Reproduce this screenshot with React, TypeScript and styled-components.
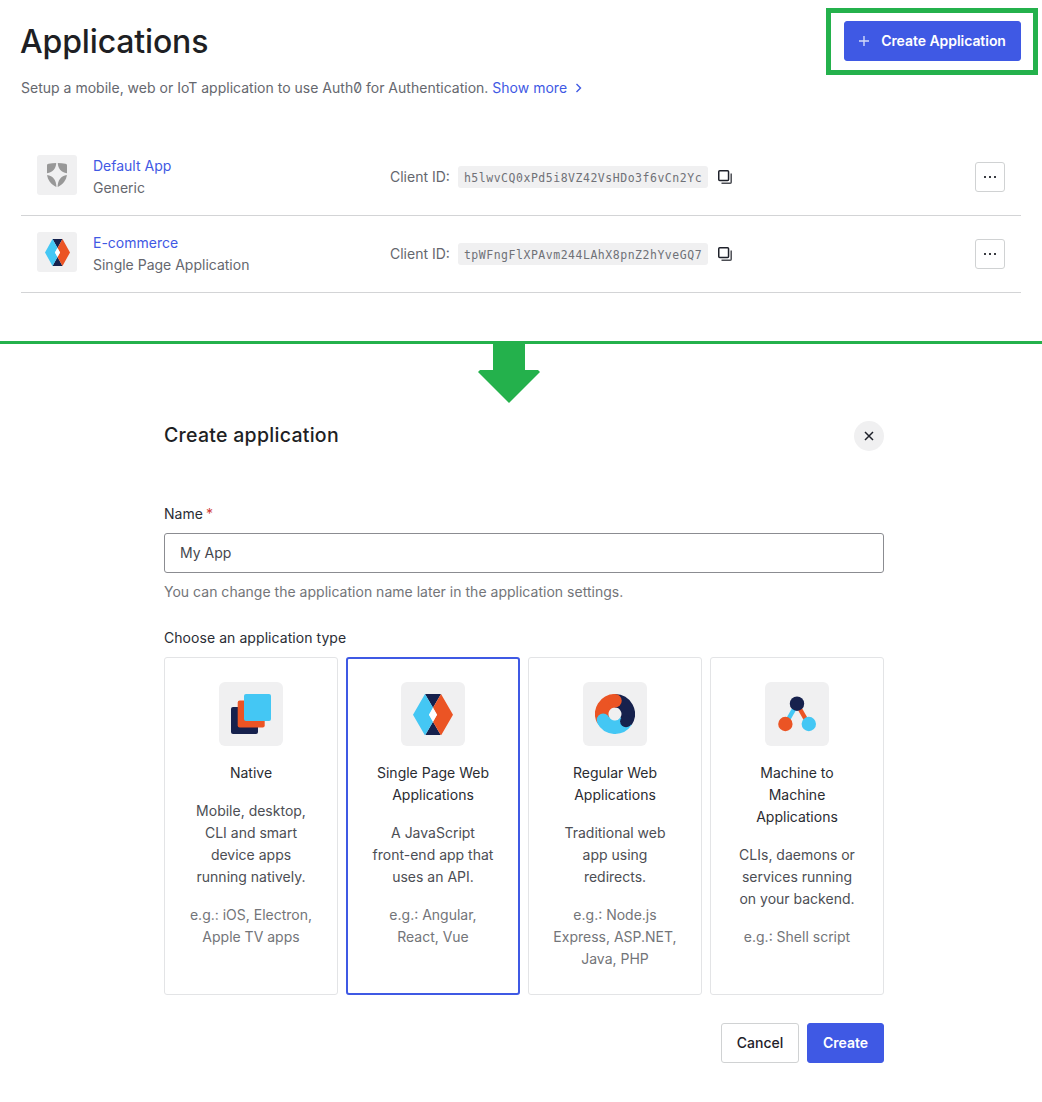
import React from "react";
import styled, { createGlobalStyle } from "styled-components";

const navy = "#16214d";
const orange = "#eb5424";
const sky = "#44c7f4";
const indigo = "#3f59e4";
const green = "#24b14c";

const Global = createGlobalStyle`
  * { box-sizing: border-box; }
  body { margin: 0; background: #fff; }
  h1, h2, p { margin: 0; font-weight: 400; }
  button { font: inherit; padding: 0; cursor: pointer; }
`;

const Page = styled.div`
  height: 1102px;
  overflow: hidden;
  font-family: Inter, "Liberation Sans", sans-serif;
  font-size: 14px;
  line-height: 22px;
  color: #65676e;
  letter-spacing: 0;
`;

const ListSection = styled.section`
  height: 341px;
  padding: 21px 21px 0;
`;

const Header = styled.header`
  display: flex;
  justify-content: space-between;
  height: 40px;
`;

const Title = styled.h1`
  margin-left: -1px;
  font-size: 32px;
  line-height: 42px;
  font-weight: 500;
  letter-spacing: -0.15px;
  color: #1e1f24;
`;

const Highlight = styled.div`
  position: relative;
  &::after {
    content: "";
    position: absolute;
    inset: -13px -17px -14px -18px;
    border: 5px solid ${green};
    pointer-events: none;
  }
`;

const Button = styled.button<{ $primary?: boolean; $width: number }>`
  display: flex;
  align-items: center;
  justify-content: center;
  width: ${(p) => p.$width}px;
  height: 40px;
  border-radius: 3px;
  border: 1px solid ${(p) => (p.$primary ? indigo : "#d0d2d3")};
  background: ${(p) => (p.$primary ? indigo : "#fff")};
  color: ${(p) => (p.$primary ? "#fff" : "#1e212a")};
  font-weight: ${(p) => (p.$primary ? 600 : 500)};
  letter-spacing: ${(p) => (p.$primary ? "-0.05px" : "0")};
  svg { margin-right: 12px; }
`;

const Intro = styled.p`
  display: flex;
  align-items: center;
  margin-top: 16px;
  white-space: pre;
  letter-spacing: 0.01px;
  font-feature-settings: "zero";
`;

const Link = styled.a`
  color: ${indigo};
`;

const Chevron = styled.svg`
  margin-left: 8px;
`;

const Rows = styled.div`
  margin-top: 40px;
`;

const Row = styled.div`
  display: flex;
  align-items: flex-start;
  height: 77px;
  padding: 16px 16px 0;
  border-bottom: 1px solid #d3d4d6;
`;

const IconTile = styled.div<{ $size: number }>`
  display: flex;
  flex: none;
  align-items: center;
  justify-content: center;
  width: ${(p) => p.$size}px;
  height: ${(p) => p.$size}px;
  border-radius: ${(p) => (p.$size > 40 ? 6 : 3)}px;
  background: #f0f0f1;
`;

const AppInfo = styled.div`
  width: 313px;
  padding-left: 16px;
`;

const ClientId = styled.div`
  display: flex;
  flex: 1;
  align-items: center;
  height: 44px;
`;

const ClientLabel = styled.span`
  width: 68px;
`;

const Code = styled.code`
  width: 250px;
  height: 22px;
  padding-top: 1px;
  margin-right: 10px;
  border-radius: 3px;
  background: #f0f0f1;
  text-align: center;
  font-family: "DejaVu Sans Mono", monospace;
  font-size: 11.5px;
  letter-spacing: 0.52px;
  color: #6f7177;
`;

const MoreButton = styled.button`
  display: flex;
  align-items: center;
  justify-content: center;
  width: 30px;
  height: 30px;
  margin-top: 7px;
  border: 1px solid #d0d2d3;
  border-radius: 3px;
  background: #fff;
`;

const Divider = styled.div`
  display: flex;
  flex-direction: column;
  height: 62px;
  border-top: 3px solid ${green};
`;

const Arrow = styled.svg`
  display: block;
  margin-left: 478px;
`;

const Dialog = styled.section`
  width: 720px;
  margin: 18px 0 0 164px;
`;

const DialogHeader = styled.header`
  display: flex;
  align-items: center;
  justify-content: space-between;
  height: 30px;
`;

const DialogTitle = styled.h2`
  padding-bottom: 2px;
  font-size: 19.5px;
  line-height: 28px;
  font-weight: 450;
  letter-spacing: 0.28px;
  color: #1e1f24;
`;

const CloseButton = styled.button`
  display: flex;
  align-items: center;
  justify-content: center;
  width: 30px;
  height: 30px;
  border: 0;
  border-radius: 50%;
  background: #f0f0f1;
`;

const Label = styled.label<{ $top: number; $bottom: number }>`
  display: block;
  margin: ${(p) => p.$top}px 0 ${(p) => p.$bottom}px;
  letter-spacing: 0.06px;
  color: #2a2d35;
  span { color: #d03c38; margin-left: 3px; }
`;

const Input = styled.input`
  display: block;
  width: 100%;
  height: 40px;
  padding: 0 15px 1px;
  border: 1px solid #8b8c91;
  border-radius: 3px;
  font: inherit;
  letter-spacing: inherit;
  color: #45474e;
`;

const Help = styled.p`
  margin-top: 8px;
  letter-spacing: 0.015px;
  color: #737579;
`;

const Cards = styled.div`
  display: grid;
  grid-template-columns: repeat(4, 174px);
  gap: 8px;
`;

const Card = styled.div<{ $selected?: boolean }>`
  display: flex;
  flex-direction: column;
  align-items: center;
  gap: 16px;
  height: 338px;
  padding-top: ${(p) => (p.$selected ? 23 : 24)}px;
  border: ${(p) => (p.$selected ? `2px solid ${indigo}` : "1px solid #e3e4e6")};
  border-radius: 3px;
  text-align: center;
  white-space: pre-line;
`;

const CardTitle = styled.p`
  color: #2a2c32;
`;

const CardText = styled.p`
  color: #4c4e54;
`;

const CardExample = styled.p`
  color: #737579;
`;

const Footer = styled.footer`
  display: flex;
  justify-content: flex-end;
  gap: 8px;
  margin-top: 28px;
`;

const ShieldIcon = () => (
  <svg width="20" height="24" viewBox="0 0 20 24" fill="#989898">
    <path d="M9.200 0C9.200 5 6 9.300 0 10.200V2.500C0 1.400.5.900 1.600.700 4 .2 6.500 0 9.200 0Z" />
    <path d="M10.800 0C10.800 5 14 9.300 20 10.200V2.500C20 1.400 19.500.900 18.400.700 16 .2 13.500 0 10.800 0Z" />
    <path d="M.1 12C6 12.800 9.200 17 9.400 24 4 21.500.7 17 .1 12Z" />
    <path d="M19.900 12C14 12.800 10.800 17 10.600 24 16 21.500 19.300 17 19.900 12Z" />
  </svg>
);

const SpaSvg = styled.svg`
  margin-top: 1px;
`;

const SpaIcon = ({ width, height }: { width: number; height: number }) => (
  <SpaSvg width={width} height={height} viewBox="0 0 40 42" preserveAspectRatio="none">
    <path d="M12 0H28L20 14ZM12 42H28L20 28Z" fill={navy} />
    <path d="M12 0 20 14 16 21 20 28 12 42 0 21Z" fill={sky} />
    <path d="M28 0 20 14 24 21 20 28 28 42 40 21Z" fill={orange} />
    <path d="M20 14 24 21 20 28 16 21Z" fill="#fff" />
  </SpaSvg>
);

const NativeIcon = () => (
  <svg width="40" height="40" viewBox="0 0 40 40">
    <rect y="13" width="27" height="27" rx="2" fill={navy} />
    <rect x="6.700" y="6.500" width="27" height="27" rx="2" fill={orange} />
    <rect x="13" width="27" height="27" rx="2" fill={sky} />
  </svg>
);

const WebIcon = () => (
  <svg width="40" height="40" viewBox="0 0 40 40">
    <g fill="none" strokeWidth="13.500">
      <path d="M20 6.750A13.250 13.250 0 0 1 31 27.300" stroke={navy} />
      <path d="M31 27.300A13.250 13.250 0 0 1 8.200 26" stroke={sky} />
      <path d="M8.200 26A13.250 13.250 0 0 1 20 6.750" stroke={orange} />
    </g>
    <circle cx="31" cy="27.300" r="5.900" fill={navy} />
    <circle cx="8.200" cy="26" r="6.500" fill={sky} />
    <circle cx="20" cy="6.750" r="6.750" fill={orange} />
  </svg>
);

const MachineIcon = () => (
  <svg width="40" height="40" viewBox="0 0 40 40">
    <path d="M20 10 8.500 30" stroke={sky} strokeWidth="4.500" />
    <path d="M20 10 31.500 30" stroke={orange} strokeWidth="4.500" />
    <circle cx="20" cy="9.700" r="7.200" fill={navy} />
    <circle cx="8.400" cy="30" r="7.200" fill={orange} />
    <circle cx="31.800" cy="30" r="7.200" fill={sky} />
  </svg>
);

const CopyIcon = () => (
  <svg width="14" height="14" viewBox="0 0 14 14" fill="none">
    <rect x=".75" y=".75" width="9.800" height="9.800" rx="1" stroke="#1e212a" strokeWidth="1.500" />
    <path d="M13.200 3.500V12.200Q13.200 13.200 12.200 13.200H3.500" stroke="#4c4e54" strokeWidth="1.500" />
  </svg>
);

const apps = [
  { name: "Default App", kind: "Generic", id: "h5lwvCQ0xPd5i8VZ42VsHDo3f6vCn2Yc", icon: <ShieldIcon /> },
  { name: "E-commerce", kind: "Single Page Application", id: "tpWFngFlXPAvm244LAhX8pnZ2hYveGQ7", icon: <SpaIcon width={25} height={27} /> },
];

const types = [
  { title: "Native", text: "Mobile, desktop,\nCLI and smart\ndevice apps\nrunning natively.", example: "e.g.: iOS, Electron,\nApple TV apps", icon: <NativeIcon /> },
  { title: "Single Page Web\nApplications", text: "A JavaScript\nfront-end app that\nuses an API.", example: "e.g.: Angular,\nReact, Vue", icon: <SpaIcon width={40} height={41.5} />, selected: true },
  { title: "Regular Web\nApplications", text: "Traditional web\napp using\nredirects.", example: "e.g.: Node.js\nExpress, ASP.NET,\nJava, PHP", icon: <WebIcon /> },
  { title: "Machine to\nMachine\nApplications", text: "CLIs, daemons or\nservices running\non your backend.", example: "e.g.: Shell script", icon: <MachineIcon /> },
];

export default function App() {
  return (
    <Page>
      <Global />
      <ListSection>
        <Header>
          <Title>Applications</Title>
          <Highlight>
            <Button $primary $width={177}>
              <svg width="10" height="10" viewBox="0 0 10 10" stroke="#d3daf9" strokeWidth="1.400">
                <path d="M0 5H10M5 0V10" />
              </svg>
              Create Application
            </Button>
          </Highlight>
        </Header>
        <Intro>
          Setup a mobile, web or IoT application to use Auth0 for Authentication. <Link>Show more</Link>
          <Chevron width="7" height="10" viewBox="0 0 7 10" fill="none" stroke={indigo} strokeWidth="1.400">
            <path d="M1.500 1 5.500 5 1.500 9" />
          </Chevron>
        </Intro>
        <Rows>
          {apps.map((app) => (
            <Row key={app.id}>
              <IconTile $size={40}>{app.icon}</IconTile>
              <AppInfo>
                <Link>{app.name}</Link>
                <p>{app.kind}</p>
              </AppInfo>
              <ClientId>
                <ClientLabel>Client ID:</ClientLabel>
                <Code>{app.id}</Code>
                <CopyIcon />
              </ClientId>
              <MoreButton aria-label="More">
                <svg width="12" height="2" viewBox="0 0 12 2" fill="#3a3c42">
                  <path d="M0 0h2v2H0zM5 0h2v2H5zM10 0h2v2h-2z" />
                </svg>
              </MoreButton>
            </Row>
          ))}
        </Rows>
      </ListSection>
      <Divider>
        <Arrow width="62" height="59" viewBox="0 0 62 59" fill={green}>
          <path d="M15 0H47V26H60L62 28 31 59 0 28 2 26H15Z" />
        </Arrow>
      </Divider>
      <Dialog>
        <DialogHeader>
          <DialogTitle>Create application</DialogTitle>
          <CloseButton aria-label="Close">
            <svg width="10" height="10" viewBox="0 0 10 10" stroke="#1e212a" strokeWidth="1.500">
              <path d="M1 1 9 9M9 1 1 9" />
            </svg>
          </CloseButton>
        </DialogHeader>
        <Label $top={52} $bottom={8}>
          Name<span>*</span>
        </Label>
        <Input defaultValue="My App" />
        <Help>You can change the application name later in the application settings.</Help>
        <Label $top={24} $bottom={8}>Choose an application type</Label>
        <Cards>
          {types.map((t) => (
            <Card key={t.title} $selected={t.selected}>
              <IconTile $size={64}>{t.icon}</IconTile>
              <CardTitle>{t.title}</CardTitle>
              <CardText>{t.text}</CardText>
              <CardExample>{t.example}</CardExample>
            </Card>
          ))}
        </Cards>
        <Footer>
          <Button $width={78}>Cancel</Button>
          <Button $primary $width={77}>Create</Button>
        </Footer>
      </Dialog>
    </Page>
  );
}
